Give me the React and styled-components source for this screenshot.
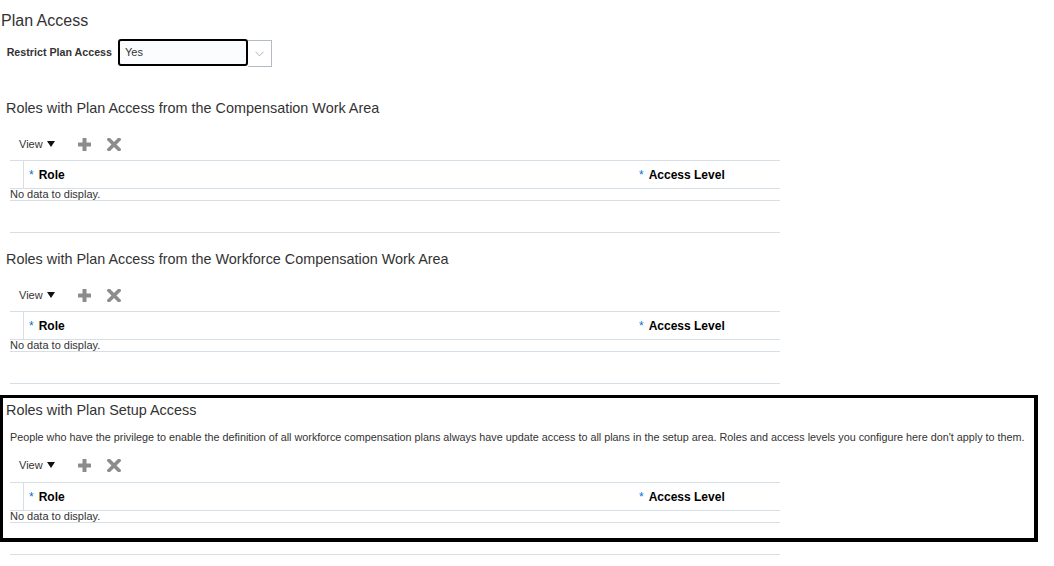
import React from 'react';
import styled, { createGlobalStyle } from 'styled-components';

const Global = createGlobalStyle`
  html, body { margin: 0; padding: 0; background: #fff; }
  body { font-family: "Liberation Sans", Arial, sans-serif; color: #333; }
  * { box-sizing: border-box; }
`;

const Page = styled.div`
  width: 1054px;
  height: 566px;
  overflow: hidden;
`;

const Title = styled.h1`
  margin: 0;
  padding: 11px 0 0 1px;
  font-size: 16px;
  font-weight: normal;
  line-height: 20px;
  color: #333;
`;

const FieldRow = styled.div`
  display: flex;
  align-items: flex-start;
  margin-top: 8px;
  margin-bottom: 32px;
`;

const FieldLabel = styled.label`
  width: 118px;
  padding-right: 6px;
  text-align: right;
  font-size: 10.7px;
  font-weight: bold;
  color: #333;
  line-height: 27px;
`;

const SelectBox = styled.div`
  width: 130px;
  height: 27px;
  border: 2px solid #000;
  border-radius: 3px;
  background: #fbfcfe;
  padding-left: 5px;
  font-size: 11px;
  line-height: 23px;
  color: #333;
`;

const DropButton = styled.div`
  width: 24px;
  height: 27px;
  margin-top: 1px;
  border: 1px solid #b3bcc3;
  border-left: none;
  background: #fff;
  display: flex;
  align-items: center;
  justify-content: center;
`;

const Section = styled.section`
  position: relative;
  margin-top: 17px;
`;

const Highlight = styled.div`
  position: absolute;
  top: -6px;
  left: 0;
  width: 1038px;
  height: 147px;
  border-style: solid;
  border-color: #000;
  border-width: 3px 4px 4px 3px;
  pointer-events: none;
`;

const SectionTitle = styled.h2`
  margin: 0 0 0 6px;
  font-size: 14.4px;
  font-weight: normal;
  line-height: 18px;
  color: #333;
`;

const Description = styled.p`
  margin: 11px 0 0 10px;
  font-size: 10.8px;
  line-height: 14px;
  color: #333;
`;

const Toolbar = styled.div`
  display: flex;
  align-items: center;
  height: 28px;
  margin-top: ${p => p.$afterText ? 7 : 13}px;
  margin-bottom: ${p => p.$afterText ? 3 : 2}px;
  padding-left: 19px;
`;

const ViewMenu = styled.div`
  display: flex;
  align-items: center;
  font-size: 11px;
  color: #333;
  gap: 4px;
  margin-right: 23px;
`;

const IconButton = styled.button`
  border: none;
  background: none;
  padding: 0;
  width: 14px;
  height: 13px;
  margin-right: ${p => p.$gap || 0}px;
  display: flex;
`;

const Table = styled.div`
  margin-left: 10px;
  width: 770px;
  border-top: 1px solid #d6dfe6;
  border-bottom: 1px solid #d6dfe6;
`;

const HeaderRow = styled.div`
  display: grid;
  grid-template-columns: 14px 609px 1fr;
  height: 28px;
  border-bottom: 1px solid #d6dfe6;
`;

const HeaderCell = styled.div`
  padding-left: ${p => p.$pad || 0}px;
  border-right: ${p => p.$divider ? '1px solid #d6dfe6' : 'none'};
  display: flex;
  align-items: center;
  font-size: 12px;
  font-weight: bold;
  color: #000;
`;

const Required = styled.span`
  color: #0572ce;
  font-weight: normal;
  font-size: 12px;
  margin-right: 5px;
`;

const EmptyRow = styled.div`
  font-size: 11px;
  line-height: 11px;
  height: 12px;
  color: #333;
  border-bottom: 1px solid #d6dfe6;
`;

const Filler = styled.div`
  height: 31px;
`;

const Chevron = () => (
  <svg width="9" height="6" viewBox="0 0 9 6">
    <path d="M0.5 0.8 L4.5 4.8 L8.5 0.8" fill="none" stroke="#a9b0b6" strokeWidth="1" />
  </svg>
);

const Caret = () => (
  <svg width="8" height="6" viewBox="0 0 8 6">
    <path d="M0 0 H8 L4 6 Z" fill="#111" />
  </svg>
);

const PlusIcon = () => (
  <svg width="13" height="13" viewBox="0 0 13 13">
    <rect x="0" y="4.5" width="13" height="4" rx="0.6" fill="#8c8c8c" />
    <rect x="4.5" y="0" width="4" height="13" rx="0.6" fill="#8c8c8c" />
  </svg>
);

const CloseIcon = () => (
  <svg width="14" height="13" viewBox="0 0 14 13">
    <path d="M2 1.5 L12 11.5 M12 1.5 L2 11.5" stroke="#8c8c8c" strokeWidth="3.6" strokeLinecap="square" />
  </svg>
);

const RolesSection = ({ title, description, highlighted }) => (
  <Section>
    {highlighted && <Highlight />}
    <SectionTitle>{title}</SectionTitle>
    {description && <Description>{description}</Description>}
    <Toolbar $afterText={!!description}>
      <ViewMenu>View <Caret /></ViewMenu>
      <IconButton $gap={15} aria-label="Add"><PlusIcon /></IconButton>
      <IconButton aria-label="Delete"><CloseIcon /></IconButton>
    </Toolbar>
    <Table>
      <HeaderRow>
        <HeaderCell $divider />
        <HeaderCell $pad={5}><Required>*</Required>Role</HeaderCell>
        <HeaderCell $pad={6}><Required>*</Required>Access Level</HeaderCell>
      </HeaderRow>
      <EmptyRow>No data to display.</EmptyRow>
      <Filler />
    </Table>
  </Section>
);

export default function App() {
  return (
    <Page>
      <Global />
      <Title>Plan Access</Title>
      <FieldRow>
        <FieldLabel>Restrict Plan Access</FieldLabel>
        <SelectBox>Yes</SelectBox>
        <DropButton><Chevron /></DropButton>
      </FieldRow>
      <RolesSection title="Roles with Plan Access from the Compensation Work Area" />
      <RolesSection title="Roles with Plan Access from the Workforce Compensation Work Area" />
      <RolesSection
        highlighted
        title="Roles with Plan Setup Access"
        description="People who have the privilege to enable the definition of all workforce compensation plans always have update access to all plans in the setup area. Roles and access levels you configure here don't apply to them."
      />
    </Page>
  );
}
